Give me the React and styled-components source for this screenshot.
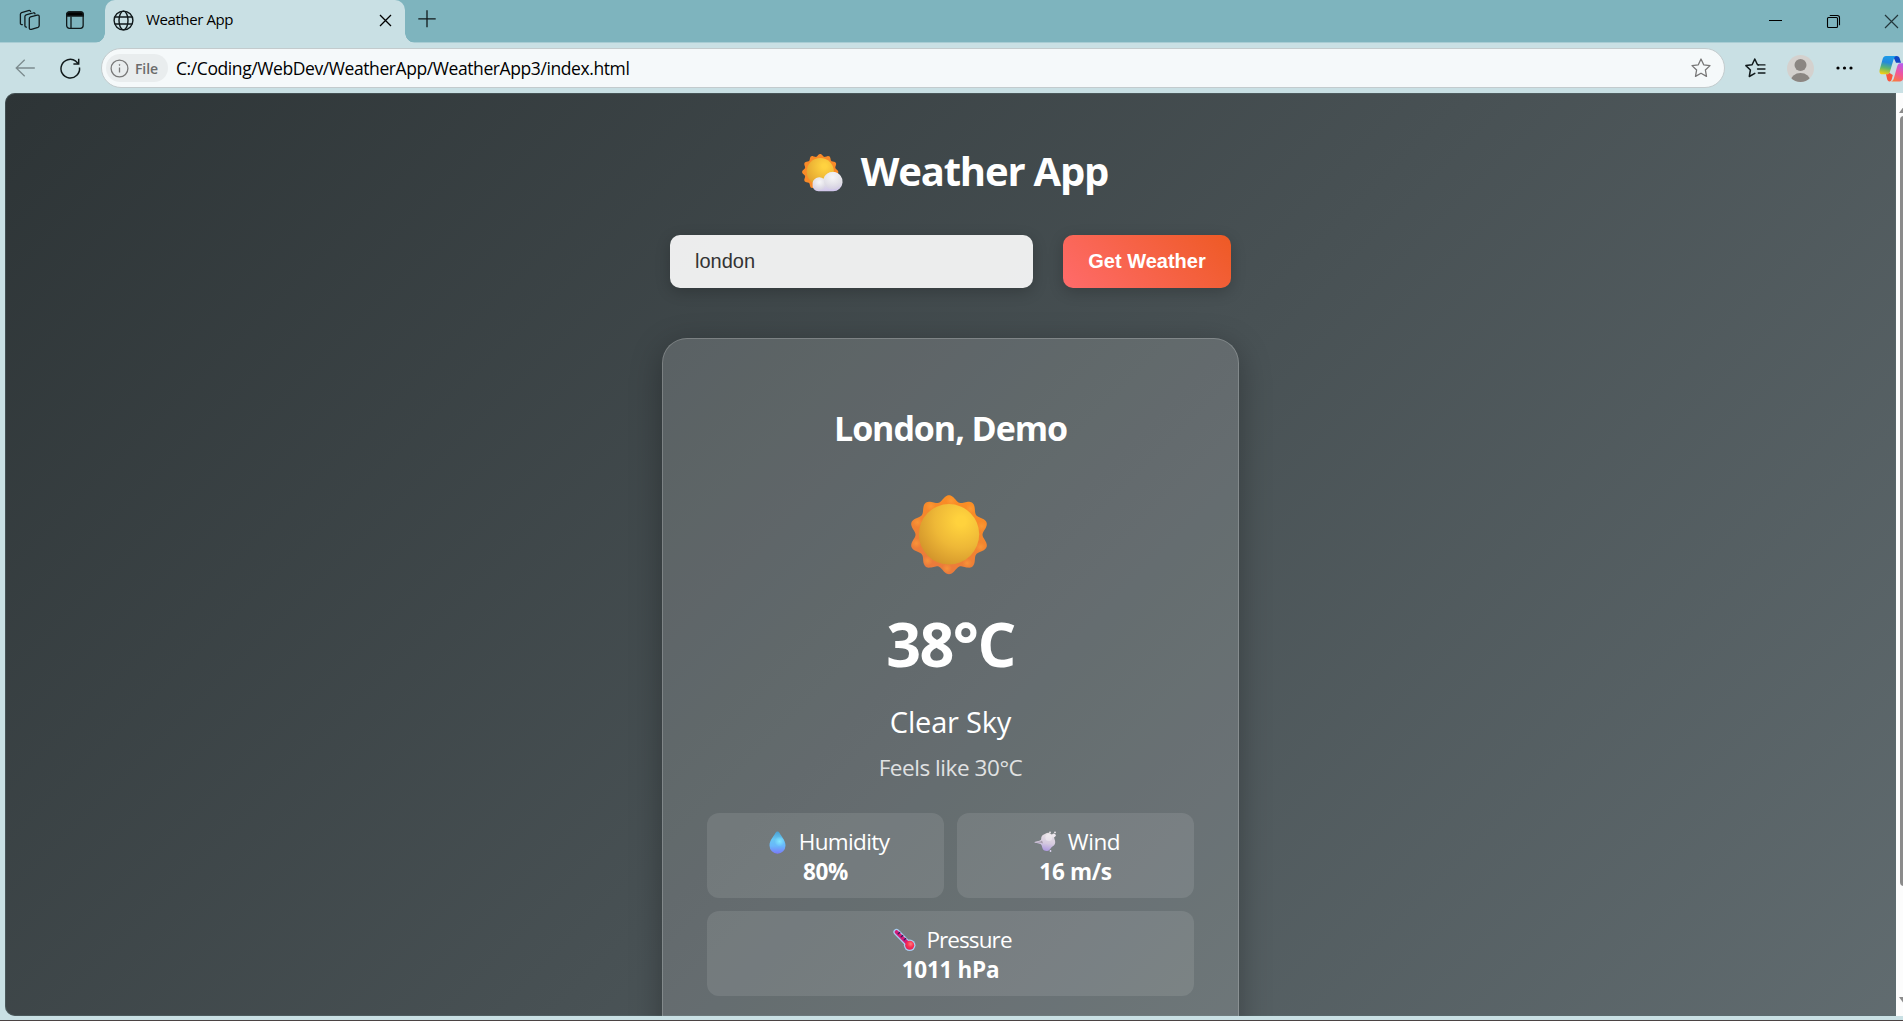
import React from "react";
import styled, { createGlobalStyle, css } from "styled-components";

const UI_FONT = `"Open Sans", "Noto Sans", sans-serif`;
const FORM_FONT = `"Liberation Sans", Arial, sans-serif`;

const GlobalStyle = createGlobalStyle`
  *, *::before, *::after { box-sizing: border-box; }
  html, body { margin: 0; height: 100%; overflow: hidden; }
  #root { height: 100%; }
  svg { display: block; flex: none; overflow: visible; }
`;

const Window = styled.div`
  display: flex;
  flex-direction: column;
  width: 1903px;
  height: 1021px;
  overflow: hidden;
  background: #c9e0e4;
  border-bottom: 1px solid #4b4343;
  font-family: ${UI_FONT};
  color: #000;
`;

/* ---------- tab strip ---------- */

const TabStrip = styled.header`
  display: flex;
  align-items: stretch;
  flex: none;
  height: 43px;
  background: #7eb4be;
  border-bottom: 1px solid #a9cdd4;
`;

const StripTools = styled.div`
  display: flex;
  align-items: center;
  gap: 24px;
  width: 105px;
  padding: 0 0 3px 19px;
`;

const Tab = styled.div`
  position: relative;
  display: flex;
  align-items: center;
  width: 300px;
  height: 43px;
  padding: 0 14px 3px 8px;
  border-radius: 10px 10px 0 0;
  background: #c9e0e4;

  &::before,
  &::after {
    content: "";
    position: absolute;
    bottom: 0;
    width: 10px;
    height: 10px;
  }
  &::before {
    left: -10px;
    background: radial-gradient(circle at 0 0, transparent 9.5px, #c9e0e4 10px);
  }
  &::after {
    right: -10px;
    background: radial-gradient(circle at 100% 0, transparent 9.5px, #c9e0e4 10px);
  }
`;

const TabTitle = styled.span`
  flex: 1;
  margin: 0 0 2px 12px;
  font-size: 15px;
  line-height: 20px;
  letter-spacing: -0.4px;
`;

const NewTab = styled.div`
  display: flex;
  align-items: center;
  padding: 0 0 4px 13px;
`;

const Caption = styled.div`
  display: flex;
  align-items: center;
  gap: 45px;
  margin-left: auto;
`;

/* ---------- toolbar ---------- */

const Toolbar = styled.div`
  display: flex;
  align-items: center;
  flex: none;
  height: 50px;
  padding-left: 15px;
`;

const NavButtons = styled.div`
  display: flex;
  align-items: center;
  flex: none;
  gap: 25px;
  width: 86px;
`;

const AddressBar = styled.div`
  display: flex;
  align-items: center;
  flex: none;
  width: 1624px;
  height: 40px;
  padding: 0 13px 0 4px;
  border: 1px solid #c3cbcd;
  border-radius: 20px;
  background: #f5f9fa;
`;

const FileChip = styled.div`
  display: flex;
  align-items: center;
  gap: 6px;
  width: 62px;
  height: 28px;
  padding-left: 4px;
  border-radius: 14px;
  background: #e9edee;
  color: #6b6b6b;
  font-size: 14px;
  font-weight: 600;
  letter-spacing: -0.1px;
`;

const Url = styled.span`
  flex: 1;
  margin-left: 8px;
  font-size: 17.5px;
  line-height: 24px;
  letter-spacing: -0.41px;
`;

const ToolbarActions = styled.div`
  display: flex;
  align-items: center;
  flex: none;
  margin-left: 20px;
`;

const Slot = styled.div`
  flex: none;
  margin-right: ${(p) => p.$after}px;
`;

/* ---------- viewport ---------- */

const Viewport = styled.div`
  display: flex;
  flex: none;
  height: 923px;
  padding-left: 5px;
`;

const Page = styled.main`
  display: flex;
  flex-direction: column;
  align-items: center;
  flex: none;
  width: 1891px;
  height: 923px;
  padding-top: 48px;
  overflow: hidden;
  border-radius: 10px 0 0 10px;
  background: linear-gradient(135deg, #2d3436, #636e72) 0 0 / 100% 1051px no-repeat;
  box-shadow: inset 0 0 0 1px rgba(90, 110, 114, 0.45);
  color: #fff;
`;

const Scrollbar = styled.div`
  display: flex;
  flex-direction: column;
  align-items: center;
  width: 16px;
  flex: none;
  padding-top: 13px;
  background: #fcfcfc;
`;

const Thumb = styled.div`
  width: 8px;
  height: 770px;
  margin: 3px 0 auto;
  border-radius: 4px;
  background: #8b8b8b;
`;

const Arrow = styled.div`
  width: 0;
  height: 0;
  border-left: 5px solid transparent;
  border-right: 5px solid transparent;
  ${(p) =>
    p.$down
      ? css`
          border-top: 7px solid #8b8b8b;
          margin-bottom: 12px;
        `
      : css`
          border-bottom: 7px solid #8b8b8b;
        `}
`;

const Title = styled.h1`
  display: flex;
  align-items: center;
  gap: 11px;
  height: 60px;
  margin: 0 0 34px;
  padding-left: 8px;
  font-size: 40px;
  font-weight: 700;
  line-height: 60px;
  letter-spacing: -1.2px;

  svg {
    margin-top: 3px;
  }
`;

const TitleText = styled.span`
  margin-right: -1px;
`;

const SearchRow = styled.form`
  display: flex;
  gap: 30px;
  margin: 0 0 50px;
`;

const CityInput = styled.input`
  width: 363px;
  height: 53px;
  padding: 0 25px;
  border: 0;
  border-radius: 10px;
  outline: 0;
  background: rgba(255, 255, 255, 0.9);
  box-shadow: 0 4px 15px rgba(0, 0, 0, 0.2);
  color: #333;
  font: 20px ${FORM_FONT};
`;

const SearchButton = styled.button`
  width: 168px;
  height: 53px;
  padding: 0;
  border: 0;
  border-radius: 10px;
  background: linear-gradient(45deg, #ff6b6b, #ee5a24);
  box-shadow: 0 4px 15px rgba(0, 0, 0, 0.2);
  color: #fff;
  font: 700 20px ${FORM_FONT};
`;

const Card = styled.section`
  display: flex;
  flex-direction: column;
  align-items: center;
  flex: none;
  width: 577px;
  height: 760px;
  padding: 64px 44px 0;
  border: 1px solid rgba(255, 255, 255, 0.2);
  border-radius: 25px;
  background: rgba(255, 255, 255, 0.15);
  box-shadow: 0 8px 32px rgba(0, 0, 0, 0.3);
`;

const Line = styled.p`
  margin: ${(p) => p.$top || 0}px 0 0;
  font-size: ${(p) => p.$size}px;
  font-weight: ${(p) => (p.$bold ? 700 : 400)};
  line-height: ${(p) => p.$line}px;
  letter-spacing: ${(p) => p.$track || 0}px;
  opacity: ${(p) => p.$opacity || 1};
`;

const SunSlot = styled.div`
  height: 80px;
  margin: 42px 3px 0 0;
`;

const Stats = styled.div`
  display: grid;
  grid-template-columns: 1fr 1fr;
  gap: 13px;
  width: 487px;
  margin-top: 30px;
`;

const Stat = styled.div`
  display: flex;
  flex-direction: column;
  align-items: center;
  height: 85px;
  padding-top: 14px;
  grid-column: ${(p) => (p.$wide ? "1 / -1" : "auto")};
  border-radius: 12px;
  background: rgba(255, 255, 255, 0.1);
  font-size: 22.5px;
  line-height: 30px;
`;

const StatLabel = styled.div`
  display: flex;
  align-items: center;
  gap: 6px;
  height: 30px;
  letter-spacing: ${(p) => p.$track}px;
`;

const StatValue = styled.strong`
  height: 30px;
  font-weight: 700;
  letter-spacing: -0.3px;
`;

/* ---------- drawings ---------- */

function petalPath(cx, cy, base, wave, lobes) {
  const pts = [];
  for (let i = 0; i < 240; i++) {
    const a = (i / 240) * Math.PI * 2;
    const r = base + wave * Math.cos(lobes * a);
    pts.push(`${(cx + r * Math.sin(a)).toFixed(2)} ${(cy - r * Math.cos(a)).toFixed(2)}`);
  }
  return `M${pts.join("L")}Z`;
}

const Sun = () => (
  <svg width="80" height="80" viewBox="0 0 80 80">
    <defs>
      <linearGradient id="petals" x1="0.7" y1="0" x2="0.3" y2="1">
        <stop offset="0" stopColor="#fd8f22" />
        <stop offset="0.5" stopColor="#f28430" />
        <stop offset="1" stopColor="#e9793e" />
      </linearGradient>
      <radialGradient id="disc" cx="0.7" cy="0.28" r="0.8">
        <stop offset="0.1" stopColor="#ffd23d" />
        <stop offset="0.55" stopColor="#eeb837" />
        <stop offset="1" stopColor="#d3952b" />
      </radialGradient>
      <radialGradient id="tip">
        <stop offset="0" stopColor="#ffa23a" />
        <stop offset="1" stopColor="#ffa23a" stopOpacity="0" />
      </radialGradient>
    </defs>
    <path d={petalPath(40, 39.7, 36.5, 3, 10)} fill="url(#petals)" />
    {[0, 1, 2, 3, 4, 5, 6, 7, 8, 9].map((i) => (
      <circle key={i} cx="42" cy="6" r="5" fill="url(#tip)" transform={`rotate(${i * 36} 40 39.7)`} opacity="0.6" />
    ))}
    <circle cx="40" cy="39.3" r="30.2" fill="url(#disc)" />
  </svg>
);

const SunCloud = () => (
  <svg width="48" height="40" viewBox="0 0 48 40">
    <defs>
      <radialGradient id="miniSun" cx="0.65" cy="0.3" r="0.8">
        <stop offset="0.1" stopColor="#ffd240" />
        <stop offset="1" stopColor="#e0a02e" />
      </radialGradient>
      <linearGradient id="cloudFill" x1="0.4" y1="0" x2="0.5" y2="1">
        <stop offset="0" stopColor="#f2f2f4" />
        <stop offset="0.6" stopColor="#e2e0e8" />
        <stop offset="1" stopColor="#cfc4ea" />
      </linearGradient>
      <radialGradient id="puff" cx="0.5" cy="0.35" r="0.6">
        <stop offset="0" stopColor="#ffffff" />
        <stop offset="1" stopColor="#d9d7df" />
      </radialGradient>
    </defs>
    <path d={petalPath(18.2, 19, 16.9, 1.2, 12)} fill="#f98a28" />
    <circle cx="18.3" cy="18.6" r="13.6" fill="url(#miniSun)" />
    <path d="M16.500 38.300a6 6 0 0 1-5.900-7 6.700 6.700 0 0 1 11-5.500 9.700 9.700 0 1 1 9.500 12.500z" fill="url(#cloudFill)" />
    <circle cx="17.400" cy="31" r="6" fill="url(#puff)" opacity="0.7" />
    <circle cx="30.700" cy="27.500" r="8.800" fill="url(#puff)" opacity="0.55" />
  </svg>
);

const Drop = () => (
  <svg width="31" height="30" viewBox="0 0 31 30">
    <defs>
      <linearGradient id="drop" x1="0.5" y1="0" x2="0.5" y2="1">
        <stop offset="0" stopColor="#4a9fd0" />
        <stop offset="0.35" stopColor="#67c6f3" />
        <stop offset="0.65" stopColor="#69b8fb" />
        <stop offset="1" stopColor="#7a79f8" />
      </linearGradient>
      <radialGradient id="dropShine">
        <stop offset="0" stopColor="#84e6ff" />
        <stop offset="1" stopColor="#84e6ff" stopOpacity="0" />
      </radialGradient>
    </defs>
    <path d="M15.500 4.500c1 0 1.600.6 2.100 1.600 1.500 3.300 5.900 7.200 5.900 12.400a8 8.200 0 0 1-16 0c0-5.200 4.400-9.100 5.900-12.400.5-1 1.100-1.600 2.100-1.600z" fill="url(#drop)" />
    <circle cx="17.500" cy="14.500" r="5" fill="url(#dropShine)" />
  </svg>
);

const WindFace = () => (
  <svg width="31" height="30" viewBox="0 0 31 30">
    <defs>
      <linearGradient id="wind" x1="0.6" y1="0" x2="0.4" y2="1">
        <stop offset="0" stopColor="#e9e2e6" />
        <stop offset="0.55" stopColor="#d5cade" />
        <stop offset="1" stopColor="#aa94e0" />
      </linearGradient>
    </defs>
    <path d="M3.400 15.200c0-.8 5.200-.8 6.600-2.400.5-.6-.2-2.300.9-3.800 1.200-1.700 2.900-1.500 3.900-2.400 1.300-1 3.300-1.300 4.500 0 .8.9 2.300.8 3.300 2.200.9 1.300.5 2.700 1.100 4 .7 1.600.8 3.700-.4 5.200-.9 1.200-2.200 1.500-3 2.600-1.100 1.500-2.200 3.600-4.500 3.500-2.500 0-4-1.300-4.400-3-.4-1.400-.6-3.300-2-4.100-1.800-.9-6-.9-6-1.800z" fill="url(#wind)" />
    <path d="M11 13.500c-1.500 1.600-4 1.500-7 1.700 3 .3 5.500.1 8 1.200z" fill="#8f8592" opacity="0.7" />
    <circle cx="17.800" cy="10.500" r="3.500" fill="#fff" opacity="0.35" />
    <circle cx="22.800" cy="8.300" r="1.900" fill="#eee8ee" />
    <circle cx="19" cy="5.300" r="0.900" fill="#f1eaf0" />
    <circle cx="24" cy="5.300" r="0.900" fill="#f1eaf0" />
    <circle cx="19.500" cy="24" r="0.900" fill="#ddd5f2" />
  </svg>
);

const Thermometer = () => (
  <svg width="31" height="30" viewBox="0 0 31 30">
    <defs>
      <radialGradient id="bulb" cx="0.6" cy="0.35" r="0.7">
        <stop offset="0" stopColor="#ff7a80" />
        <stop offset="0.5" stopColor="#fb3052" />
        <stop offset="1" stopColor="#dc1f5c" />
      </radialGradient>
    </defs>
    <g strokeLinecap="round">
      <path d="M7.500 7l13 13.200" stroke="#a9cdf4" strokeWidth="6.200" />
      <circle cx="20.700" cy="20.300" r="5.800" fill="#a9cdf4" />
      <path d="M7.500 7l13 13.200" stroke="#d41b78" strokeWidth="3.800" />
      <circle cx="20.700" cy="20.300" r="4.500" fill="url(#bulb)" />
      <path d="M10.700 7.500l-1.500 1.300M13.700 10.500l-1.500 1.300M16.700 13.500l-1.500 1.300" stroke="#31225c" strokeWidth="1.300" />
    </g>
  </svg>
);

const Workspaces = () => (
  <svg width="22" height="22" viewBox="0 0 22 22" fill="none" stroke="#10191b" strokeWidth="1.3" strokeLinejoin="round" strokeLinecap="round">
    <path d="M10.300 9.600c0-.9.400-1.400 1.200-1.700l6.700-1.700c1.300-.3 2 .2 2 1.300v9.100c0 .9-.4 1.400-1.200 1.700l-6.600 2c-1.300.4-2.100-.1-2.100-1.300z" />
    <path d="M7.400 18.200c-.9 0-1.500-.5-1.500-1.400V7.500c0-.9.400-1.400 1.200-1.700l6.900-1.900c1-.3 1.800.1 2 .9" />
    <path d="M3.300 15.700c-1.200 0-1.900-.5-1.900-1.500V5.300c0-.9.400-1.400 1.200-1.700l6.800-2c1-.3 1.900 0 2.200.9" />
  </svg>
);

const VerticalTabs = () => (
  <svg width="20" height="20" viewBox="0 0 20 20" fill="none" stroke="#10191b" strokeWidth="1.300">
    <rect x="1.650" y="2" width="16.500" height="16.300" rx="2.700" />
    <path d="M1.700 6V4.500C1.700 3 2.700 2 4.200 2h11.500c1.500 0 2.500 1 2.500 2.500V6z" fill="#000" />
    <path d="M6 6.500v11.800" />
  </svg>
);

const Globe = () => (
  <svg width="21" height="21" viewBox="0 0 21 21" fill="none" stroke="#10191b" strokeWidth="1.400">
    <circle cx="10.500" cy="10.500" r="9.400" />
    <ellipse cx="10.500" cy="10.500" rx="4.500" ry="9.400" />
    <path d="M1.800 7h17.400M1.800 14h17.400" />
  </svg>
);

const Cross = ({ size, color, weight }) => (
  <svg width={size} height={size} viewBox="0 0 10 10" fill="none" stroke={color} strokeWidth={weight}>
    <path d="M0 0l10 10M10 0L0 10" />
  </svg>
);

const Plus = () => (
  <svg width="18" height="18" viewBox="0 0 18 18" stroke="#10191b" strokeWidth="1.300">
    <path d="M9 .3v17M.3 8.800h17.400" />
  </svg>
);

const Minimize = () => (
  <svg width="13" height="13" viewBox="0 0 13 13" stroke="#000" strokeWidth="1">
    <path d="M0 5.500h13" />
  </svg>
);

const Restore = () => (
  <svg width="13" height="13" viewBox="0 0 13 13" fill="none" stroke="#000" strokeWidth="1.100">
    <rect x="0.500" y="2.500" width="10" height="10" rx="1" />
    <path d="M2.800.5h7.500c1.300 0 2.200.9 2.200 2.200v7.500" />
  </svg>
);

const Back = () => (
  <svg width="20" height="18" viewBox="0 0 20 18" fill="none" stroke="#7c8b8e" strokeWidth="1.300">
    <path d="M9.700.7L1.200 9l8.500 8.300M1.200 9h18.600" />
  </svg>
);

const Reload = () => (
  <svg width="21" height="21" viewBox="0 0 21 21" fill="none" stroke="#10191b" strokeWidth="1.500">
    <path d="M19.500 9.500A9.300 9.300 0 1 1 15.800 3.200L18.200 5.600" />
    <path d="M18.700.8v5.300h-5.300" />
  </svg>
);

const Info = () => (
  <svg width="19" height="19" viewBox="0 0 19 19" fill="none" stroke="#7a7a7a" strokeWidth="1.300">
    <circle cx="9.500" cy="9.500" r="8.400" />
    <path d="M9.500 8.500v5" />
    <circle cx="9.500" cy="5.900" r="0.500" fill="#7a7a7a" strokeWidth="0.700" />
  </svg>
);

const STAR = "M10 1l2.700 5.800 6.300.8-4.600 4.400 1.100 6.400-5.500-3.200-5.500 3.200 1.100-6.400L1 7.600l6.300-.8z";

const Star = () => (
  <svg width="20" height="20" viewBox="0 0 20 20" fill="none" stroke="#777" strokeWidth="1.300" strokeLinejoin="round">
    <path d={STAR} />
  </svg>
);

const Favorites = () => (
  <svg width="21" height="20" viewBox="0 0 21 20" fill="none" stroke="#10191b" strokeWidth="1.500" strokeLinejoin="round" strokeLinecap="round">
    <path d="M13.500 6.900l-1-.2L9.800 1 7.100 6.800.9 7.600l4.500 4.400-1.100 6.500 5.500-3.100" />
    <path d="M13.500 6.900h6.500M12.500 11h7.500M13.300 15h6.700" strokeWidth="1.300" />
  </svg>
);

const Avatar = () => (
  <svg width="27" height="27" viewBox="0 0 27 27">
    <defs>
      <clipPath id="avatarClip">
        <circle cx="13.500" cy="13.500" r="13.500" />
      </clipPath>
    </defs>
    <circle cx="13.500" cy="13.500" r="13.500" fill="#d4d1ce" />
    <g clipPath="url(#avatarClip)" fill="#8b8682">
      <circle cx="13.500" cy="10" r="6" />
      <ellipse cx="13.500" cy="26.500" rx="10" ry="8.500" />
    </g>
  </svg>
);

const Dots = () => (
  <svg width="17" height="4" viewBox="0 0 17 4" fill="#000">
    <circle cx="2" cy="2" r="1.600" />
    <circle cx="8.500" cy="2" r="1.600" />
    <circle cx="15" cy="2" r="1.600" />
  </svg>
);

const Copilot = () => (
  <svg width="28" height="27" viewBox="0 0 28 27">
    <defs>
      <linearGradient id="coolRibbon" x1="0.5" y1="0" x2="0.3" y2="1">
        <stop offset="0" stopColor="#1b9ce8" />
        <stop offset="0.35" stopColor="#2389dd" />
        <stop offset="0.65" stopColor="#5cb56f" />
        <stop offset="1" stopColor="#f5cf11" />
      </linearGradient>
      <linearGradient id="warmRibbon" x1="0.7" y1="0" x2="0.2" y2="1">
        <stop offset="0" stopColor="#b65bf0" />
        <stop offset="0.5" stopColor="#f0569b" />
        <stop offset="1" stopColor="#fb7c3a" />
      </linearGradient>
    </defs>
    <path d="M14 1h3.500c2 0 2.800 1 3.300 2.800l1.200 4h-5z" fill="#1047c4" />
    <path d="M7 1h11c-2 0-2.800 1.500-3.400 3.300L11 16.500c-.7 2-1.500 2.800-3.500 2.800H3.500C.6 19.300 0 17 .8 14.200L3.500 4.500C4.100 2.400 5 1 7 1z" fill="url(#coolRibbon)" />
    <path d="M21 26.500H11.500c2 0 2.800-1.500 3.400-3.300L18 12c.6-2.300 1.500-3.700 3.500-3.700h3c3 0 3.500 2.500 2.700 5.200l-2.700 9.500c-.6 2-1.500 3.500-3.500 3.500z" fill="url(#warmRibbon)" />
    <path d="M7.500 19.300c2 0 2.800-.8 3.500-2.800l-.4 1.500L13.800 20l-1 4c-.4 1.500-.8 2.500-2.300 2.500-1.300 0-2-1-2.400-2.500L7 19.300z" fill="#f9553c" />
  </svg>
);

/* ---------- app ---------- */

const stats = [
  { Icon: Drop, label: "Humidity", value: "80%", track: -0.62 },
  { Icon: WindFace, label: "Wind", value: "16 m/s", track: -0.42 },
  { Icon: Thermometer, label: "Pressure", value: "1011 hPa", track: -0.9, wide: true },
];

export default function App() {
  return (
    <Window>
      <GlobalStyle />
      <TabStrip>
        <StripTools>
          <Workspaces />
          <VerticalTabs />
        </StripTools>
        <Tab>
          <Globe />
          <TabTitle>Weather App</TabTitle>
          <Cross size={11} color="#000" weight={1.2} />
        </Tab>
        <NewTab>
          <Plus />
        </NewTab>
        <Caption>
          <Minimize />
          <Restore />
          <Slot $after={5}>
            <Cross size={13} color="#23363a" weight={0.9} />
          </Slot>
        </Caption>
      </TabStrip>

      <Toolbar>
        <NavButtons>
          <Back />
          <Reload />
        </NavButtons>
        <AddressBar>
          <FileChip>
            <Info />
            File
          </FileChip>
          <Url>C:/Coding/WebDev/WeatherApp/WeatherApp3/index.html</Url>
          <Star />
        </AddressBar>
        <ToolbarActions>
          <Slot $after={21}><Favorites /></Slot>
          <Slot $after={22}><Avatar /></Slot>
          <Slot $after={26}><Dots /></Slot>
          <Copilot />
        </ToolbarActions>
      </Toolbar>

      <Viewport>
        <Page>
          <Title>
            <SunCloud />
            <TitleText>Weather App</TitleText>
          </Title>
          <SearchRow>
            <CityInput defaultValue="london" />
            <SearchButton type="button">Get Weather</SearchButton>
          </SearchRow>
          <Card>
            <Line as="h2" $bold $size={34} $line={50} $track={-1.06}>London, Demo</Line>
            <SunSlot>
              <Sun />
            </SunSlot>
            <Line $bold $size={61} $line={80} $top={29} $track={-1.6}>38°C</Line>
            <Line $size={29} $line={40} $top={18} $track={-0.19}>Clear Sky</Line>
            <Line $size={22.5} $line={30} $top={11} $track={-0.44} $opacity={0.8}>Feels like 30°C</Line>
            <Stats>
              {stats.map(({ Icon, label, value, track, wide }) => (
                <Stat key={label} $wide={wide}>
                  <StatLabel $track={track}>
                    <Icon />
                    {label}
                  </StatLabel>
                  <StatValue>{value}</StatValue>
                </Stat>
              ))}
            </Stats>
          </Card>
        </Page>
        <Scrollbar>
          <Arrow />
          <Thumb />
          <Arrow $down />
        </Scrollbar>
      </Viewport>
    </Window>
  );
}
